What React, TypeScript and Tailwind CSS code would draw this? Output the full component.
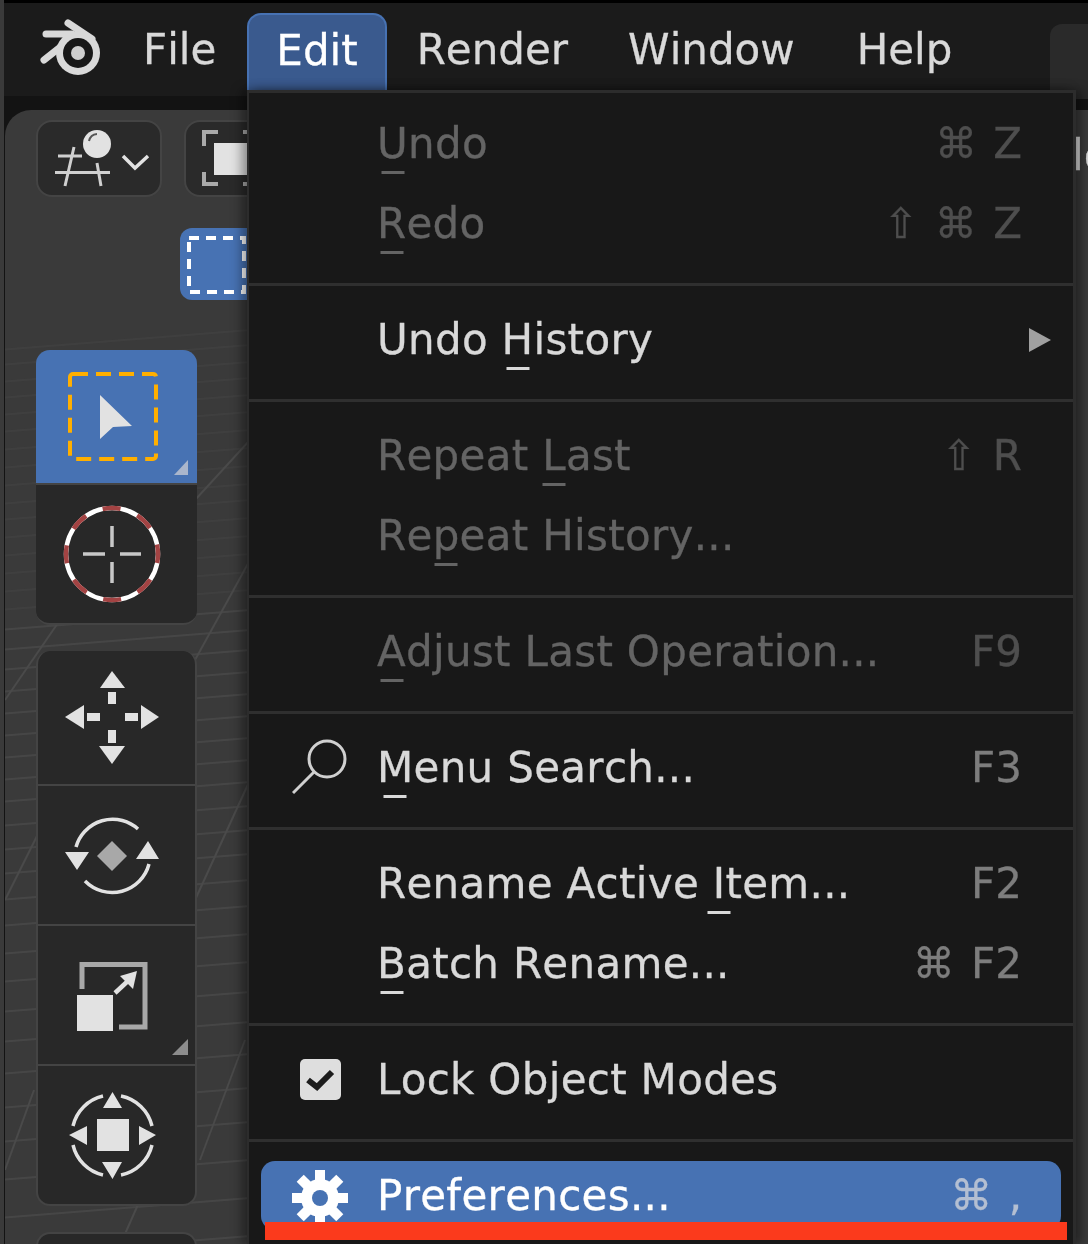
import type { ReactNode } from "react";

const FONT = "font-['DejaVu_Sans',sans-serif]";

function Key({ children }: { children: ReactNode }) {
  return (
    <span className="relative">
      {children}
      <span className="absolute left-1/2 bottom-[-6px] h-[3px] w-[23px] -translate-x-1/2 bg-current" />
    </span>
  );
}

function Row({
  icon,
  shortcut,
  disabled,
  children,
}: {
  icon?: ReactNode;
  shortcut?: ReactNode;
  disabled?: boolean;
  children: ReactNode;
}) {
  return (
    <div className={`flex h-[80px] items-center ${disabled ? "text-[#646464]" : "text-[#d9d9d9]"}`}>
      <div className="flex w-[128px] shrink-0 items-center pl-[43px]">{icon}</div>
      <div className="flex-1 pt-[2px] tracking-[0.3px] whitespace-pre">{children}</div>
      {shortcut && (
        <div
          className={`pt-[2px] pr-[51px] whitespace-pre [word-spacing:3px] ${disabled ? "text-[#4e4e4e]" : "text-[#7d7d7d]"}`}
        >
          {shortcut}
        </div>
      )}
    </div>
  );
}

function Sep() {
  return (
    <div className="flex h-[36px] items-start pt-[20px]">
      <div className="h-[3px] w-full bg-[#2f2f2f]" />
    </div>
  );
}

function BlenderLogo() {
  return (
    <svg width="62" height="58" viewBox="40 24 62 58" fill="none">
      <path d="M68 28 L92 44" stroke="#d9d9d9" strokeWidth="7" strokeLinecap="round" />
      <path d="M46 39 H72" stroke="#d9d9d9" strokeWidth="7" strokeLinecap="round" />
      <path d="M44 65 L68 46" stroke="#d9d9d9" strokeWidth="7" strokeLinecap="round" />
      <circle cx="78" cy="58" r="22" fill="#d9d9d9" />
      <circle cx="78" cy="58" r="15" fill="#181818" />
      <circle cx="78" cy="58" r="7" fill="#cfcfcf" />
    </svg>
  );
}

function SceneIcon() {
  return (
    <svg width="126" height="77" viewBox="36 120 126 77" fill="none" stroke="#d0d0d0" strokeWidth="3">
      <path d="M55 172.500H110M58 156H82M74 147L65 186M97 163L101 186" />
      <circle cx="97" cy="144" r="14" fill="#e2e2e2" stroke="none" />
      <path d="M89 141A9 9 0 0 1 97 134" stroke="#555" strokeWidth="2" />
      <path d="M123 156L135 168L148 156" stroke="#e2e2e2" strokeWidth="3.5" />
    </svg>
  );
}

function ModeIcon() {
  return (
    <svg width="70" height="77" viewBox="184 120 70 77" fill="none">
      <path d="M218 132H204V146M204 172V184H218M243 132H250M243 184H250" stroke="#aaa" strokeWidth="4" />
      <rect x="214" y="143" width="38" height="32" fill="#e2e2e2" />
    </svg>
  );
}

function BoxSelectIcon() {
  return (
    <svg width="67" height="72" viewBox="180 228 67 72" fill="none">
      <rect x="189" y="238" width="55" height="54" stroke="#fff" strokeWidth="4" strokeDasharray="10 7" />
    </svg>
  );
}

function SelectIcon() {
  return (
    <svg width="161" height="133" viewBox="36 350 161 133" fill="none">
      <rect x="70" y="374" width="86" height="85" rx="3" stroke="#ffaf00" strokeWidth="4" strokeDasharray="15 8" />
      <path d="M100 395L132 426L113 427L100 439Z" fill="#e2e2e2" />
      <path d="M188 460V475H174Z" fill="#aab6cc" />
    </svg>
  );
}

function CursorIcon() {
  return (
    <svg width="161" height="138" viewBox="36 485 161 138" fill="none">
      <circle cx="112" cy="554" r="46" stroke="#fff" strokeWidth="4.5" />
      <circle cx="112" cy="554" r="46" stroke="#a34343" strokeWidth="4.5" strokeDasharray="18 18" strokeDashoffset="9" />
      <path d="M112 526V547M112 562V583M83 554H105M120 554H141" stroke="#c8c8c8" strokeWidth="3.5" />
    </svg>
  );
}

function MoveIcon() {
  return (
    <svg width="161" height="133" viewBox="36 650 161 133" fill="#e2e2e2">
      <path d="M112 670L125 687H100Z" />
      <path d="M112 763L125 745H99Z" />
      <path d="M65 716L84 704V728Z" />
      <path d="M159 716L141 704V728Z" />
      <path d="M108 691H116V703H108ZM108 729H116V742H108ZM87 712H100V720H87ZM125 712H138V720H125Z" />
    </svg>
  );
}

function RotateIcon() {
  return (
    <svg width="161" height="138" viewBox="36 785 161 138" fill="none">
      <path d="M76 846A38 38 0 0 1 138 828" stroke="#e2e2e2" strokeWidth="3.5" />
      <path d="M149 863A38 38 0 0 1 85 880" stroke="#e2e2e2" strokeWidth="3.5" />
      <path d="M65 851H89L77 869ZM148 840L136 858H159Z" fill="#e2e2e2" />
      <path d="M112 840L127 855L112 870L97 855Z" fill="#a8a8a8" />
    </svg>
  );
}

function ScaleIcon() {
  return (
    <svg width="161" height="138" viewBox="36 925 161 138" fill="none">
      <path d="M82 988V963.500H145V1026H119" stroke="#a8a8a8" strokeWidth="5" />
      <rect x="77" y="994" width="36" height="36" fill="#e2e2e2" />
      <path d="M115 992L129 979" stroke="#e2e2e2" strokeWidth="4.5" />
      <path d="M137 970L133 988L120 975Z" fill="#e2e2e2" />
      <path d="M188 1038V1054H172Z" fill="#8d8d8d" />
    </svg>
  );
}

function TransformIcon() {
  return (
    <svg width="161" height="138" viewBox="36 1065 161 138" fill="none">
      <rect x="97" y="1118" width="32" height="32" fill="#e2e2e2" />
      <path d="M112.500 1091L122 1107H103ZM112.500 1178L122 1161H102ZM69 1134L87 1125V1144ZM156 1134L139 1125V1144Z" fill="#e2e2e2" />
      <path
        d="M73 1125A40 40 0 0 1 103 1095M121 1095A40 40 0 0 1 152 1125M152 1144A40 40 0 0 1 121 1174M103 1174A40 40 0 0 1 73 1144"
        stroke="#e2e2e2"
        strokeWidth="3.5"
      />
    </svg>
  );
}

function SearchIcon() {
  return (
    <svg width="56" height="56" viewBox="293 741 56 56" fill="none" stroke="#d0d0d0" strokeWidth="3">
      <circle cx="328" cy="761" r="18" />
      <path d="M315 774L294 795" />
    </svg>
  );
}

function CheckIcon() {
  return (
    <div className="ml-[8px] flex h-[41px] w-[41px] items-center justify-center rounded-[5px] bg-[#dedede]">
      <svg width="31" height="25" viewBox="0 0 31 25" fill="none">
        <path d="M3 13L12 20L27 5" stroke="#1c1c1c" strokeWidth="6" />
      </svg>
    </div>
  );
}

function GearIcon() {
  const angles = [0, 45, 90, 135, 180, 225, 270, 315];
  return (
    <svg width="58" height="58" viewBox="-29 -29 58 58">
      {angles.map((a) => (
        <rect key={a} x="-5" y="-28" width="10" height="14" fill="#fff" transform={`rotate(${a})`} />
      ))}
      <circle r="19" fill="#fff" />
      <circle r="8" fill="#4772b3" />
    </svg>
  );
}

function ViewportGrid() {
  const rows = [
    330, 345, 362, 378, 395, 412, 430, 448, 466, 484, 500, 518, 536, 554, 572, 590, 610, 630, 650, 672, 694, 716, 738,
    760, 782, 806, 830, 854, 880, 906, 934, 962, 992, 1022, 1054, 1088, 1122, 1160, 1198, 1236,
  ];
  const diagonals = [
    [5, 700, 60, 620],
    [5, 900, 40, 830],
    [5, 1170, 34, 1090],
    [195, 900, 250, 780],
    [200, 1160, 245, 1040],
    [125, 1234, 140, 1200],
    [195, 660, 250, 560],
    [195, 500, 250, 440],
  ];
  return (
    <svg className="absolute inset-0 h-full w-full" viewBox="5 110 1083 1134" fill="none" stroke="#4a4a4a" strokeWidth="2">
      {rows.map((y) => (
        <path key={y} d={`M0 ${y + 20}L250 ${y}`} strokeOpacity={y > 600 ? 0.8 : 0.35} />
      ))}
      {diagonals.map(([a, b, c, d]) => (
        <path key={`${a}-${b}`} d={`M${a} ${b}L${c} ${d}`} />
      ))}
    </svg>
  );
}

export default function App() {
  return (
    <div className={`${FONT} relative h-[1244px] w-[1088px] overflow-hidden bg-[#131313] text-[42px] leading-none [font-kerning:none]`}>
      <div className="h-full border-l-[4px] border-[#3a3a3a] blur-[0.7px] [-webkit-text-stroke:0.3px]">
        {/* top bar */}
        <header className="flex h-[96px] border-t-[3px] border-black bg-[#1b1b1b] pl-[36px] text-[#d9d9d9]">
          <div className="flex h-full items-center pb-[4px]">
            <BlenderLogo />
          </div>
          <nav className="ml-[10px] flex h-full items-center">
            <span className="px-[31px]">File</span>
            <span className="mt-[10px] flex h-[77px] items-center self-start rounded-t-[14px] border-[2px] border-b-0 border-[#4772b3] bg-[#3a5a8e] pr-[27px] pb-[3px] pl-[27px] text-white">
              Edit
            </span>
            <span className="pr-[30px] pl-[30px]">Render</span>
            <span className="pr-[31px] pl-[30px]">Window</span>
            <span className="px-[31px]">Help</span>
          </nav>
          <div className="mt-[21px] ml-auto h-[75px] w-[38px] rounded-tl-[12px] bg-[#2a2a2a]" />
        </header>

        {/* 3D viewport */}
        <main className="relative mt-[14px] ml-[1px] h-[1134px] overflow-hidden rounded-tl-[26px] bg-[#3a3a3a] pt-[10px] pl-[31px]">
          <ViewportGrid />
          <div className="relative flex flex-col">
            <div className="flex gap-[22px]">
              <div className="h-[77px] w-[126px] shrink-0 overflow-hidden rounded-[16px] border-[2px] border-[#444] bg-[#2a2a2a]">
                <div className="-m-[2px]">
                  <SceneIcon />
                </div>
              </div>
              <div className="h-[77px] w-[80px] shrink-0 overflow-hidden rounded-[16px] border-[2px] border-[#444] bg-[#2a2a2a]">
                <div className="-m-[2px]">
                  <ModeIcon />
                </div>
              </div>
              <span className="mt-[15px] ml-[786px] shrink-0 text-[#d9d9d9]">ld</span>
            </div>
            <div className="mt-[31px] ml-[144px] h-[72px] w-[80px] overflow-hidden rounded-[12px] bg-[#4772b3]">
              <BoxSelectIcon />
            </div>

            {/* tool shelf */}
            <div className="mt-[50px] flex w-[161px] flex-col gap-[2px] overflow-hidden rounded-[14px] border-b-[2px] border-[#444] bg-[#444]">
              <div className="h-[133px] bg-[#4772b3]">
                <SelectIcon />
              </div>
              <div className="h-[138px] bg-[#282828]">
                <CursorIcon />
              </div>
            </div>
            <div className="mt-[26px] flex w-[161px] flex-col gap-[2px] overflow-hidden rounded-[14px] border-x-[2px] border-b-[2px] border-[#444] bg-[#444]">
              <div className="-mx-[2px] h-[133px] bg-[#282828]">
                <MoveIcon />
              </div>
              <div className="-mx-[2px] h-[138px] bg-[#282828]">
                <RotateIcon />
              </div>
              <div className="-mx-[2px] h-[138px] bg-[#282828]">
                <ScaleIcon />
              </div>
              <div className="-mx-[2px] h-[138px] bg-[#282828]">
                <TransformIcon />
              </div>
            </div>
            <div className="mt-[26px] h-[60px] w-[161px] rounded-t-[14px] border-[2px] border-[#444] bg-[#282828]" />
          </div>
        </main>

        {/* Edit menu */}
        <section className="absolute top-[90px] bottom-0 left-[243px] w-[829px] border-t-[3px] border-r-[3px] border-l-[2px] border-[#2c2c2c] bg-[#181818] pt-[10px] shadow-[-6px_0_10px_rgba(0,0,0,0.35),6px_0_10px_rgba(0,0,0,0.35)]">
          <Row disabled shortcut="⌘ Z">
            <Key>U</Key>ndo
          </Row>
          <Row disabled shortcut="⇧ ⌘ Z">
            <Key>R</Key>edo
          </Row>
          <Sep />
          <Row
            shortcut={
              <svg width="24" height="26" viewBox="0 0 24 26" className="translate-x-[30px]">
                <path d="M1 1L23 13L1 25Z" fill="#a0a0a0" />
              </svg>
            }
          >
            Undo <Key>H</Key>istory
          </Row>
          <Sep />
          <Row disabled shortcut="⇧ R">
            Repeat <Key>L</Key>ast
          </Row>
          <Row disabled>
            Re<Key>p</Key>eat History...
          </Row>
          <Sep />
          <Row disabled shortcut="F9">
            <Key>A</Key>djust Last Operation...
          </Row>
          <Sep />
          <Row icon={<SearchIcon />} shortcut="F3">
            <Key>M</Key>enu Search...
          </Row>
          <Sep />
          <Row shortcut="F2">
            Rename Active <Key>I</Key>tem...
          </Row>
          <Row shortcut="⌘ F2">
            <Key>B</Key>atch Rename...
          </Row>
          <Sep />
          <Row icon={<CheckIcon />}>Lock Object Modes</Row>
          <Sep />
          <div className="mx-[12px] mt-[6px] flex h-[69px] items-center overflow-hidden rounded-[14px] bg-[#4772b3] text-white">
            <div className="mt-[4px] flex w-[116px] shrink-0 pl-[30px]">
              <GearIcon />
            </div>
            <div className="flex-1 tracking-[0.3px]">
              <Key>P</Key>references...
            </div>
            <div className="pr-[39px] whitespace-pre text-[#b4bfd2] [word-spacing:3px]">⌘ ,</div>
          </div>
        </section>
      </div>

      {/* annotation drawn over the screenshot */}
      <div className="absolute top-[1222px] left-[265px] h-[18px] w-[802px] bg-[#fb3a1c]" />
    </div>
  );
}
